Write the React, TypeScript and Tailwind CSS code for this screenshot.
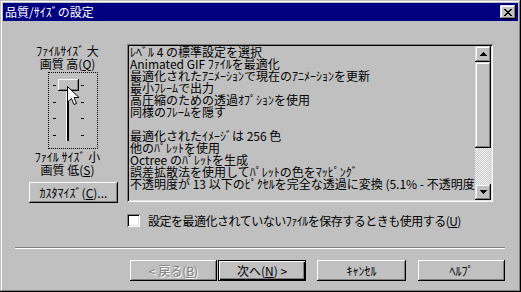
import React from "react";

const font = "font-['Noto_Sans_CJK_JP',sans-serif]";
const raised =
	"bg-[#c0c0c0] shadow-[inset_-1px_-1px_#000,inset_1px_1px_#fff,inset_-2px_-2px_#808080]";
const scrollBtn =
	"bg-[#c0c0c0] shadow-[inset_-1px_-1px_#000,inset_1px_1px_#dfdfdf,inset_-2px_-2px_#808080,inset_2px_2px_#fff]";

const lines = [
	"ﾚﾍﾞﾙ 4 の標準設定を選択",
	"Animated GIF ﾌｧｲﾙを最適化",
	"最適化されたｱﾆﾒｰｼｮﾝで現在のｱﾆﾒｰｼｮﾝを更新",
	"最小ﾌﾚｰﾑで出力",
	"高圧縮のための透過ｵﾌﾟｼｮﾝを使用",
	"同様のﾌﾚｰﾑを隠す",
	"",
	"最適化されたｲﾒｰｼﾞは 256 色",
	"他のﾊﾟﾚｯﾄを使用",
	"Octree のﾊﾟﾚｯﾄを生成",
	"誤差拡散法を使用してﾊﾟﾚｯﾄの色をﾏｯﾋﾟﾝｸﾞ",
	"不透明度が 13 以下のﾋﾟｸｾﾙを完全な透過に変換 (5.1% - 不透明度",
];

function CloseGlyph() {
	const px = [
		[0, 0], [1, 0], [6, 0], [7, 0],
		[1, 1], [2, 1], [5, 1], [6, 1],
		[2, 2], [3, 2], [4, 2], [5, 2],
		[3, 3], [4, 3],
		[2, 4], [3, 4], [4, 4], [5, 4],
		[1, 5], [2, 5], [5, 5], [6, 5],
		[0, 6], [1, 6], [6, 6], [7, 6],
	];
	return (
		<svg width="8" height="7" shapeRendering="crispEdges">
			{px.map(([x, y]) => (
				<rect key={`${x}-${y}`} x={x} y={y} width="1" height="1" fill="#000" />
			))}
		</svg>
	);
}

function Arrow({ down }: { down?: boolean }) {
	const rows = down ? [7, 5, 3, 1] : [1, 3, 5, 7];
	return (
		<svg width="7" height="4" shapeRendering="crispEdges">
			{rows.map((w, i) => (
				<rect key={i} x={(7 - w) / 2} y={i} width={w} height="1" fill="#000" />
			))}
		</svg>
	);
}

function Slider() {
	const ticks = [12, 29, 45, 62];
	return (
		<div className="ml-[19px] mt-[2px] h-[77px] w-[50px] border border-dotted border-black">
			<svg width="48" height="75" shapeRendering="crispEdges">
				{ticks.map((y) => (
					<g key={y}>
						<rect x="4" y={y} width="3" height="1" fill="#000" />
						<rect x="32" y={y} width="3" height="1" fill="#000" />
					</g>
				))}
				<rect x="17" y="7" width="1" height="61" fill="#fff" />
				<rect x="18" y="7" width="2" height="61" fill="#000" />
				<rect x="9" y="6" width="21" height="12" fill="#000" />
				<rect x="9" y="6" width="20" height="11" fill="#fff" />
				<rect x="10" y="7" width="19" height="10" fill="#808080" />
				<rect x="10" y="7" width="18" height="9" fill="#c0c0c0" />
				<path
					d="M18.5 13.5 V29 L22.5 25.5 L25 31.5 L27.5 30.5 L25 24.5 H30 Z"
					fill="#fff"
					stroke="#000"
					strokeWidth="1"
					shapeRendering="auto"
				/>
			</svg>
		</div>
	);
}

function ListBox() {
	return (
		<div className="flex h-[158px] w-[366px] bg-[#c0c0c0] p-[2px] shadow-[inset_1px_1px_#808080,inset_-1px_-1px_#fff,inset_2px_2px_#000,inset_-2px_-2px_#dfdfdf]">
			<div className="min-w-0 flex-1 pl-[1px] leading-[12px]">
				{lines.map((l, i) => (
					<div key={i} className="h-[12px] whitespace-nowrap">
						{l === "" ? "\u00a0" : l}
					</div>
				))}
			</div>
			<div className="flex w-[16px] flex-col">
				<div className={`flex h-[16px] items-center justify-center ${scrollBtn}`}>
					<Arrow />
				</div>
				<div className={`h-[86px] ${scrollBtn}`} />
				<div className="flex-1 bg-[repeating-conic-gradient(#fff_0_25%,#c0c0c0_0_50%)] bg-[length:2px_2px]" />
				<div className={`flex h-[16px] items-center justify-center ${scrollBtn}`}>
					<Arrow down />
				</div>
			</div>
		</div>
	);
}

export default function App() {
	return (
		<div
			className={`${font} h-[292px] w-[521px] bg-[#c0c0c0] p-[3px] text-[12px] text-black shadow-[inset_-1px_-1px_#000,inset_1px_1px_#c0c0c0,inset_-2px_-2px_#808080,inset_2px_2px_#fff]`}
		>
			<div className="flex h-[18px] items-center justify-between bg-[#000080] px-[2px]">
				<span className="leading-[18px] text-white">品質/ｻｲｽﾞの設定</span>
				<div className={`flex h-[14px] w-[16px] items-center justify-center ${scrollBtn}`}>
					<CloseGlyph />
				</div>
			</div>

			<div className="ml-[26px] mt-[23px] flex items-start gap-[9px]">
				<div className="flex w-[89px] flex-col">
					<div className="whitespace-nowrap pr-[12px] text-center leading-[13px]">
						ﾌｧｲﾙｻｲｽﾞ 大
					</div>
					<div className="whitespace-nowrap pr-[12px] text-center leading-[13px]">
						画質 高(<span className="underline">Q</span>)
					</div>
					<Slider />
					<div className="mt-[1px] whitespace-nowrap pr-[12px] text-center leading-[13px]">
						ﾌｧｲﾙ ｻｲｽﾞ 小
					</div>
					<div className="whitespace-nowrap pr-[12px] text-center leading-[13px]">
						画質 低(<span className="underline">S</span>)
					</div>
					<div className={`mt-[6px] flex h-[21px] w-[89px] items-center justify-center ${raised}`}>
						ｶｽﾀﾏｲｽﾞ(<span className="underline">C</span>)...
					</div>
				</div>
				<ListBox />
			</div>

			<div className="ml-[124px] mt-[11px] flex h-[13px] items-center gap-[8px]">
				<div className="h-[13px] w-[13px] bg-white shadow-[inset_1px_1px_#808080,inset_-1px_-1px_#fff,inset_2px_2px_#000,inset_-2px_-2px_#dfdfdf]" />
				<span className="whitespace-nowrap leading-[13px] tracking-[-0.5px]">
					設定を最適化されていないﾌｧｲﾙを保存するときも使用する(<span className="underline">U</span>)
				</span>
			</div>

			<div className="ml-[12px] mt-[20px] h-[2px] w-[490px] border-b border-t border-b-white border-t-[#808080]" />

			<div className="ml-[127px] mt-[11px] flex h-[21px]">
				<div className={`flex w-[87px] items-center justify-center text-[#808080] [text-shadow:1px_1px_#fff] ${raised}`}>
					&lt; 戻る(<span className="underline">B</span>)
				</div>
				<div className="ml-[1px] flex w-[88px] items-center justify-center bg-[#c0c0c0] shadow-[inset_0_0_0_1px_#000,inset_2px_2px_#fff,inset_-2px_-2px_#000,inset_-3px_-3px_#808080]">
					次へ(<span className="underline">N</span>) &gt;
				</div>
				<div className={`ml-[11px] flex w-[89px] items-center justify-center ${raised}`}>
					ｷｬﾝｾﾙ
				</div>
				<div className={`ml-[12px] flex w-[87px] items-center justify-center ${raised}`}>
					ﾍﾙﾌﾟ
				</div>
			</div>
		</div>
	);
}
